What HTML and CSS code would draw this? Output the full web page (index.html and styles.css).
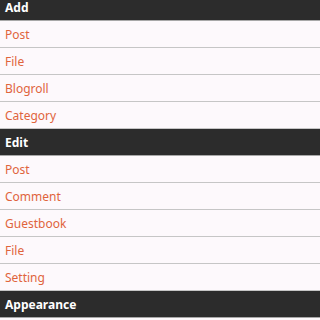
FILE: index.html
```html
<!DOCTYPE html>
<html>
<head>
<meta charset="utf-8">
<link rel="stylesheet" href="styles.css">
</head>
<body>
<div class="menu">
  <div class="section">Add</div>
  <div class="item">Post</div>
  <div class="item">File</div>
  <div class="item">Blogroll</div>
  <div class="item">Category</div>
  <div class="section">Edit</div>
  <div class="item">Post</div>
  <div class="item">Comment</div>
  <div class="item">Guestbook</div>
  <div class="item">File</div>
  <div class="item">Setting</div>
  <div class="section">Appearance</div>
</div>
</body>
</html>
```
FILE: styles.css
```css
html, body {
  margin: 0;
  padding: 0;
  background: #fdf9fc;
  overflow: hidden;
}
body {
  height: 320px;
  font-family: "Noto Sans", "Open Sans", "DejaVu Sans", sans-serif;
}
.menu {
  display: flex;
  flex-direction: column;
  margin-top: -6px;
}
.section {
  height: 26px;
  display: flex;
  align-items: center;
  padding-left: 5px;
  background: #2c2c2c;
  color: #ffffff;
  font-weight: bold;
  font-size: 12px;
  border-bottom: 1px solid #a8a8a8;
}
.item {
  height: 26px;
  display: flex;
  align-items: center;
  padding-left: 5px;
  color: #e0643c;
  font-size: 12px;
  border-bottom: 1px solid #c6c6c6;
}
```
